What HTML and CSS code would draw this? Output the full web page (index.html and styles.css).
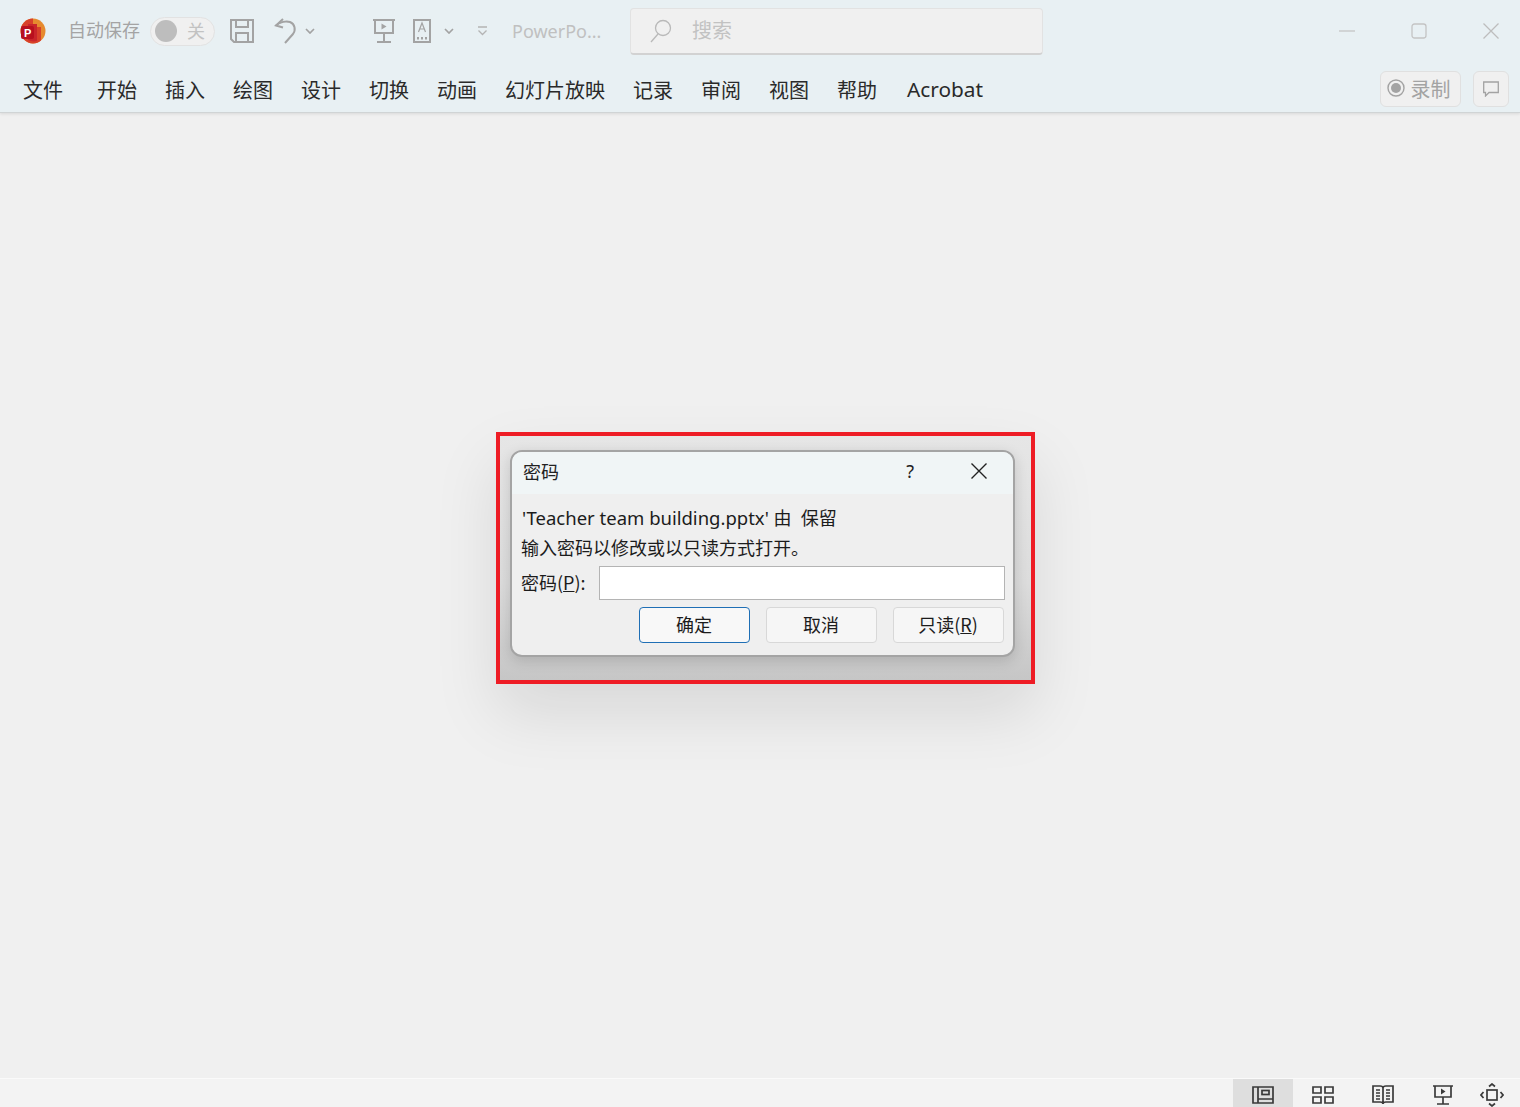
FILE: index.html
```html
<!DOCTYPE html>
<html lang="zh-CN">
<head>
<meta charset="utf-8">
<title>PowerPoint</title>
<link rel="stylesheet" href="styles.css">
</head>
<body>
<div class="app">
  <header class="ribbon">
    <div class="titlebar">
      <svg class="logo" width="26" height="26" viewBox="0 0 26 26">
        <circle cx="13" cy="13" r="12.5" fill="#e68a2e"/>
        <path d="M13 .5A12.5 12.5 0 0 0 .5 13 12.5 12.5 0 0 0 13 25.5c3 0 6-1 8-3V9h-8z" fill="#d8402a"/>
        <path d="M8 6h9v17a12 12 0 0 1-9-1z" fill="#c9252b"/>
        <rect x="1" y="8" width="13" height="13" rx="2" fill="#b8101e"/>
        <text x="4" y="18.5" class="logo-p">P</text>
      </svg>
      <span class="autosave">自动保存</span>
      <span class="toggle"><i class="knob"></i><span class="toggle-label">关</span></span>
      <svg class="qa save" width="26" height="26" viewBox="0 0 26 26" fill="none" stroke="#a3a3a3" stroke-width="2">
        <path d="M2 2h22v22H5l-3-3z"/><path d="M7 2v7h12V2M7 24v-9h12v9"/>
      </svg>
      <svg class="qa undo" width="24" height="26" viewBox="0 0 24 26" fill="none" stroke="#a3a3a3" stroke-width="2">
        <path d="M9 1 2 7.500l7 2"/><path d="M2 7.500C6 4 12 3 16 4c5 2 6 8 3 12l-8 9"/>
      </svg>
      <svg class="chev undo-chev" width="10" height="6" viewBox="0 0 10 6" fill="none" stroke="#a3a3a3" stroke-width="1.700"><path d="m1 1 4 4 4-4"/></svg>
      <svg class="qa present" width="24" height="24" viewBox="0 0 24 24" fill="none" stroke="#a3a3a3" stroke-width="2">
        <path d="M1 1h22M3 1v13h18V1M12 14v8M5 23h14"/><path d="M9.500 4.500v6l5-3z" fill="#a3a3a3" stroke="none"/>
      </svg>
      <span class="qa doc">
        <svg width="18" height="24" viewBox="0 0 18 24" fill="none" stroke="#a3a3a3" stroke-width="2">
          <path d="M1 1h16v22H1z"/><path d="m5.500 13 3.500-9 3.500 9M7 10h4" stroke-width="1.200"/><path d="M4 18h2v2.500H4zM8 18h2v2.500H8zM12 18h2v2.500h-2z" fill="#a3a3a3" stroke="none"/>
        </svg>
      </span>
      <svg class="chev doc-chev" width="10" height="6" viewBox="0 0 10 6" fill="none" stroke="#a3a3a3" stroke-width="1.700"><path d="m1 1 4 4 4-4"/></svg>
      <svg class="custom" width="11" height="10" viewBox="0 0 11 10" fill="none" stroke="#b4b4b4" stroke-width="1.300"><path d="M1 1h9M1.500 4.500l4 4 4-4"/></svg>
      <span class="appname">PowerPo...</span>
      <div class="search">
        <svg width="22" height="24" viewBox="0 0 22 24" fill="none" stroke="#b9b9b9" stroke-width="1.300"><circle cx="13" cy="9" r="7.500"/><path d="M8 15 1 23"/></svg>
        <span>搜索</span>
      </div>
      <div class="winctrls">
        <svg width="16" height="16" viewBox="0 0 16 16" stroke="#c4c4c4" stroke-width="1.300" fill="none"><path d="M0 8h16"/></svg>
        <svg width="16" height="16" viewBox="0 0 16 16" stroke="#c4c4c4" stroke-width="1.300" fill="none"><rect x="1" y="1" width="14" height="14" rx="2.500"/></svg>
        <svg width="16" height="16" viewBox="0 0 16 16" stroke="#bdbdbd" stroke-width="1.300" fill="none"><path d="m.5.500 15 15M15.500.500l-15 15"/></svg>
      </div>
    </div>
    <nav class="tabs">
      <span class="tab tab-file">文件</span>
      <span class="tab">开始</span>
      <span class="tab">插入</span>
      <span class="tab">绘图</span>
      <span class="tab">设计</span>
      <span class="tab">切换</span>
      <span class="tab">动画</span>
      <span class="tab">幻灯片放映</span>
      <span class="tab">记录</span>
      <span class="tab">审阅</span>
      <span class="tab">视图</span>
      <span class="tab tab-help">帮助</span>
      <span class="tab tab-latin">Acrobat</span>
      <div class="tab-actions">
        <span class="pill record">
          <svg width="18" height="18" viewBox="0 0 18 18"><circle cx="9" cy="9" r="8" fill="none" stroke="#a3a3a3" stroke-width="1.400"/><circle cx="9" cy="9" r="5" fill="#a3a3a3"/></svg>
          录制
        </span>
        <span class="pill comment">
          <svg width="16" height="16" viewBox="0 0 16 16" fill="none" stroke="#a3a3a3" stroke-width="1.300"><path d="M.7 1h14.600v10.500H6l-3.500 3.500v-3.500H.7z"/></svg>
        </span>
      </div>
    </nav>
  </header>

  <main class="stage">
    <div class="highlight">
      <section class="dialog">
        <div class="dlg-title">
          <span class="dlg-name">密码</span>
          <span class="dlg-help">?</span>
          <svg class="dlg-close" width="16" height="16" viewBox="0 0 16 16" fill="none" stroke="#222" stroke-width="1.400"><path d="m.5.500 15 15M15.500.500l-15 15"/></svg>
        </div>
        <div class="dlg-body">
          <p class="line line-file"><span class="file-name">'Teacher team building.pptx'</span> 由&nbsp; 保留</p>
          <p class="line line-info">输入密码以修改或以只读方式打开。</p>
          <div class="pw-row">
            <label class="pw-label">密码(<u>P</u>):</label>
            <span class="pw-input"></span>
          </div>
          <div class="btn-row">
            <span class="btn btn-primary">确定</span>
            <span class="btn">取消</span>
            <span class="btn">只读(<u>R</u>)</span>
          </div>
        </div>
      </section>
    </div>
  </main>

  <footer class="status">
    <span class="view active">
      <svg width="22" height="18" viewBox="0 0 22 18" fill="none" stroke="#3a3a3a" stroke-width="1.700"><path d="M1 1h20v16H1zM6 1v16M6 13h15"/><rect x="10" y="4.500" width="7" height="4"/></svg>
    </span>
    <span class="view">
      <svg width="22" height="18" viewBox="0 0 22 18" fill="none" stroke="#3a3a3a" stroke-width="1.700"><path d="M1 1h8v6H1zM13 1h8v6h-8zM1 11h8v6H1zM13 11h8v6h-8z"/></svg>
    </span>
    <span class="view">
      <svg width="22" height="20" viewBox="0 0 22 20" fill="none" stroke="#3a3a3a" stroke-width="1.700"><path d="M1 1h7c2 0 3 1 3 2 0-1 1-2 3-2h7v16h-7c-2 0-3 1-3 2 0-1-1-2-3-2H1zM11 3v16M4 5h4M4 8h4M4 11h4M4 14h4M14 5h4M14 8h4M14 11h4M14 14h4"/></svg>
    </span>
    <span class="view">
      <svg width="20" height="20" viewBox="0 0 20 20" fill="none" stroke="#3a3a3a" stroke-width="1.700"><path d="M0 1h20M2 1v11h16V1M10 12v7M4 19h12"/><path d="M8 3.500v6l4.500-3z" fill="#3a3a3a" stroke="none"/></svg>
    </span>
    <span class="view view-last">
      <svg width="24" height="24" viewBox="0 0 24 24" fill="none" stroke="#3a3a3a" stroke-width="1.700"><rect x="7" y="7" width="10" height="10"/><path d="m9 3.500 3-2.500 3 2.500M9 20.500l3 2.500 3-2.500M3.500 9 1 12l2.500 3M20.500 9l2.500 3-2.500 3"/></svg>
    </span>
  </footer>
</div>
</body>
</html>
```
FILE: styles.css
```css
* { box-sizing: border-box; }
html, body { margin: 0; padding: 0; height: 100%; }
body {
  font-family: "Noto Sans", "Noto Sans CJK SC", sans-serif;
  color: #222;
  background: #f0f0f0;
  overflow: hidden;
}
svg { display: block; flex: none; }

.app { width: 1520px; height: 1107px; display: flex; flex-direction: column; }

/* ribbon */
.ribbon {
  height: 113px;
  flex: none;
  background: #e8f0f3;
  border-bottom: 1px solid #d0d4d5;
  box-shadow: 0 1px 3px rgba(0,0,0,.1);
  position: relative;
}
.titlebar { height: 62px; display: flex; align-items: center; padding-left: 20px; }
.logo-p { font: bold 11px "Liberation Sans", sans-serif; fill: #fff; }
.autosave { margin-left: 22px; font-size: 18px; line-height: 24px; margin-top: -3px; color: #a4a4a4; width: 72px; white-space: nowrap; }
.toggle {
  margin-left: 10px;
  width: 65px; height: 29px;
  border: 1px solid #e2e2e2;
  border-radius: 15px;
  background: #f0f0f0;
  display: flex; align-items: center;
  padding-left: 4px;
}
.knob { width: 22px; height: 22px; border-radius: 50%; background: #bdbdbd; }
.toggle-label { margin-left: 10px; font-size: 18px; line-height: 24px; margin-top: -1px; color: #c2c2c2; }
.save { margin-left: 14px; }
.undo { margin-left: 19px; }
.undo-chev { margin-left: 7px; }
.present { margin-left: 57px; }
.doc { margin-left: 17px; display: block; }
.doc-chev { margin-left: 13px; }
.custom { margin-left: 23px; }
.appname { margin-left: 24px; margin-top: -1px; font-size: 18px; color: #c0c0c0; width: 94px; flex: none; white-space: nowrap; }
.search {
  width: 413px; height: 47px;
  flex: none;
  margin-left: 24px;
  margin-top: 1px;
  border-radius: 4px;
  background: #f0f0f0;
  border: 1px solid #e2e2e2;
  border-bottom: 2px solid #d2d2d2;
  display: flex; align-items: center;
  padding-left: 19px;
  font-size: 20px; color: #c2c2c2;
}
.search span { margin-left: 20px; line-height: 28px; }
.winctrls {
  margin-left: auto;
  padding-right: 21px;
  display: flex; gap: 56px; align-items: center;
}

/* tabs */
.tabs { height: 50px; display: flex; align-items: center; padding: 0 11px 0 23px; gap: 28px; font-size: 20px; color: #2a2a2a; }
.tab { white-space: nowrap; line-height: 28px; margin-top: 7px; }
.tab-file { margin-right: 6px; }
.tab-help { margin-right: 2px; }
.tab-latin { font-size: 20.800px; margin-top: 3px; }
.tab-actions { margin-left: auto; display: flex; gap: 12px; margin-top: 4px; }
.pill {
  height: 36px;
  display: flex; align-items: center; justify-content: center;
  background: #f0f0f0;
  border: 1px solid #e0e0e0;
  border-radius: 6px;
  font-size: 20px; color: #a3a3a3;
}
.record { width: 81px; gap: 6px; padding: 0 4px 2px 0; }
.comment { width: 36px; }

/* stage */
.stage { flex: 1; padding: 319px 0 0 496px; background: #f0f0f0; }
.highlight {
  width: 539px; height: 252px;
  border: 4px solid #ee1c25;
  padding: 14px 0 0 10px;
  background: linear-gradient(#e6e6e6, #dcdcdc 60%, #c6c6c6);
  box-shadow: 0 30px 60px rgba(0,0,0,.1);
}
.dialog {
  width: 505px; height: 207px;
  border: 2px solid #a4a4a4;
  border-radius: 12px;
  background: #efefef;
  overflow: hidden;
  box-shadow: 0 4px 14px rgba(0,0,0,.14);
}
.dlg-title {
  height: 42px;
  background: #f0f5f6;
  display: flex; align-items: center;
  padding: 0 26px 4px 11px;
  font-size: 18px; color: #222;
}
.dlg-help { margin-left: auto; font-size: 18px; }
.dlg-close { margin-left: 57px; }
.dlg-body { padding: 9px 8px 0 9px; font-size: 18px; color: #1c1c1c; }
.line { margin: 0; line-height: 30px; white-space: nowrap; }
.line-file { padding-left: 1px; }
.file-name { font-size: 18.500px; }
.pw-row { display: flex; align-items: center; margin-top: 3px; }
.pw-label { width: 78px; flex: none; padding-bottom: 2px; white-space: nowrap; font-family: "Noto Sans CJK SC", sans-serif; }
.pw-input { width: 406px; height: 34px; background: #fff; border: 1px solid #b4b4b4; }
.btn-row { display: flex; justify-content: flex-end; gap: 16px; margin-top: 7px; padding-right: 1px; }
.btn {
  width: 111px; height: 36px;
  display: flex; align-items: center; justify-content: center;
  padding: 0 1px 2px 0;
  background: #f6f6f6;
  border: 1px solid #d8d8d8;
  border-radius: 4px;
  font-size: 18px;
  white-space: nowrap;
  font-family: "Noto Sans CJK SC", sans-serif;
}
.btn-primary { border-color: #1f6fb5; background: #f8f8f8; }

/* status */
.status {
  height: 29px; flex: none;
  background: #f3f3f3;
  border-top: 1px solid #fafafa;
  display: flex; justify-content: flex-end; align-items: center;
  padding-right: 9px;
}
.view { width: 60px; height: 28px; display: flex; align-items: center; justify-content: center; }
.view svg { margin-top: 3px; }
.view.active { background: #dedede; }
.view-last { width: 38px; }
```
